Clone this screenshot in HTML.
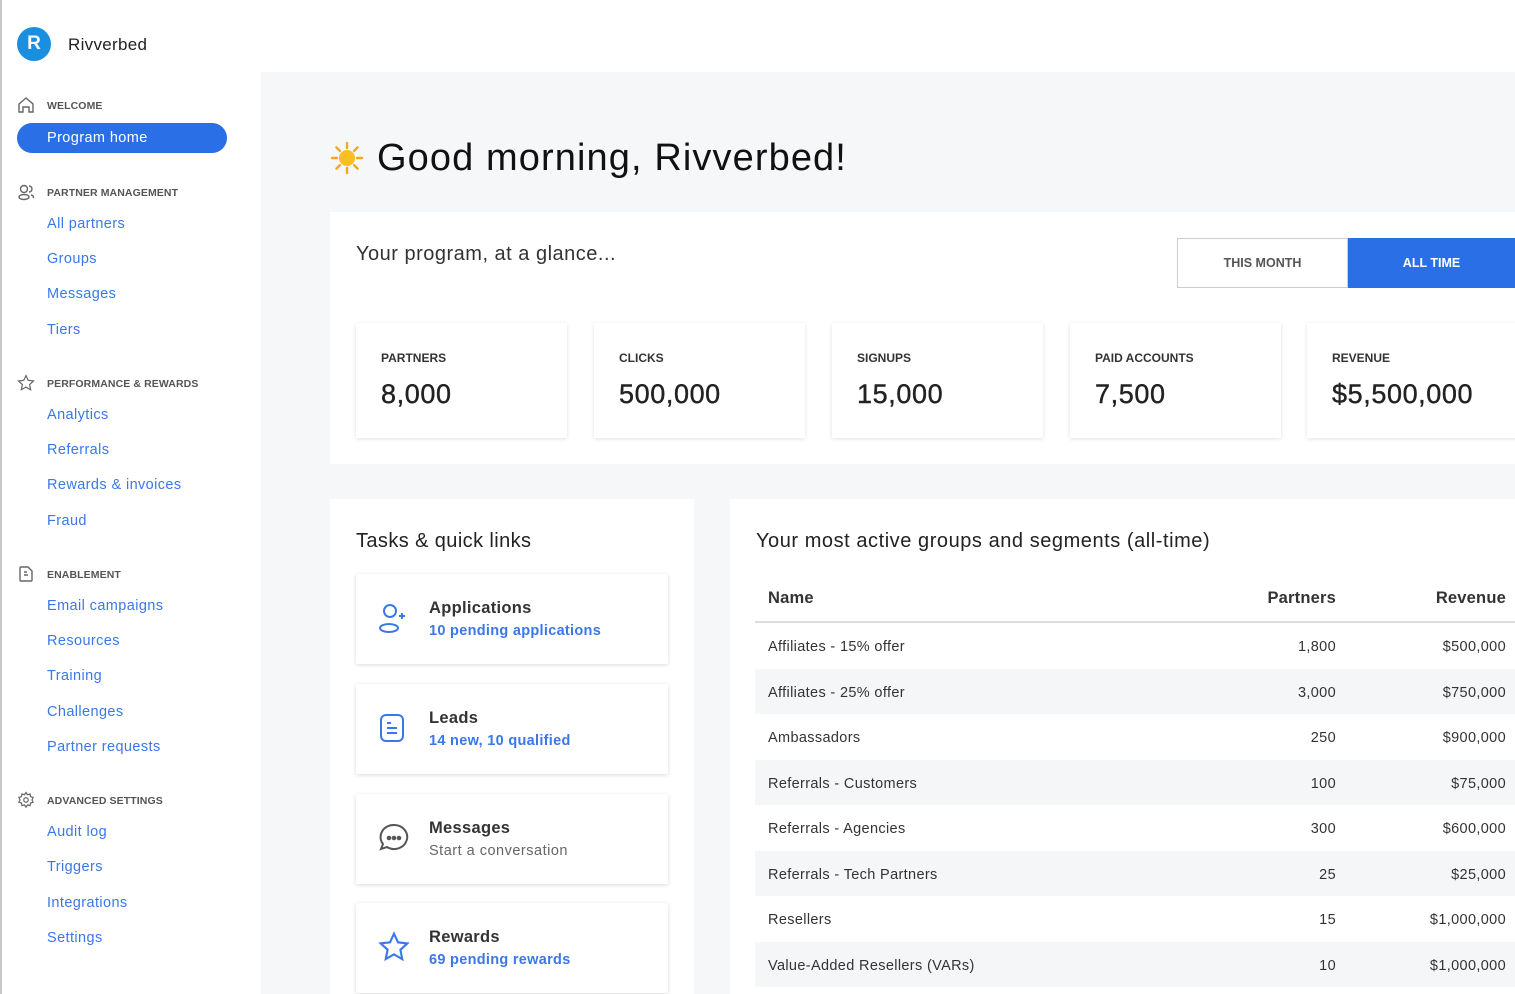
<!DOCTYPE html>
<html><head><meta charset="utf-8"><style>
*{margin:0;padding:0;box-sizing:border-box}
body{width:1515px;height:994px;overflow:hidden;background:#fff;font-family:"Liberation Sans",sans-serif;position:relative;color:#222}
.a{position:absolute}
.side{left:0;top:0;width:261px;height:994px;background:#fff;border-left:2px solid #c8c8c8}
.main{left:261px;top:72px;width:1254px;height:922px;background:#f6f7f9}
.sec{position:absolute;left:47px;font-size:10.5px;font-weight:bold;color:#555;letter-spacing:.1px}
.lnk{position:absolute;left:47px;font-size:14.5px;color:#3b78e7;letter-spacing:.4px}
.ic{position:absolute;left:17px}
.card{position:absolute;background:#fff}
.stat{position:absolute;top:323px;width:211px;height:115px;background:#fff;box-shadow:0 1px 4px rgba(0,0,0,.12)}
.stat .l{position:absolute;left:25px;top:28px;font-size:12px;font-weight:bold;color:#333}
.stat .v{position:absolute;left:25px;top:56px;font-size:27px;color:#222;letter-spacing:.6px;-webkit-text-stroke:.4px #222}
.task{position:absolute;left:356px;width:312px;height:90px;background:#fff;box-shadow:0 1px 4px rgba(0,0,0,.15);border-radius:2px}
.task .t{position:absolute;left:73px;top:25px;font-size:16.5px;font-weight:bold;color:#333;letter-spacing:.3px}
.task .s{position:absolute;left:73px;top:49px;font-size:14.5px;font-weight:bold;color:#3b78e7;letter-spacing:.3px}
.task svg{position:absolute;left:22px;top:28px}
.row{position:absolute;left:755px;width:760px;height:45px;font-size:14.5px;color:#333;letter-spacing:.35px}
.row span{position:absolute;top:16px}
.row .n{left:13px}.row .p{right:179px}.row .r{right:9px}
.sh{background:#f5f6f8}
</style></head><body>
<div class="a side"></div>
<div class="a main"></div>
<div class="a" style="left:17px;top:27px;width:34px;height:34px;border-radius:50%;background:#1a8fe0;color:#fff;font-weight:bold;font-size:19px;text-align:center;line-height:34px">R</div>
<div class="a" style="left:68px;top:35px;font-size:17px;color:#222;letter-spacing:.3px">Rivverbed</div>

<svg class="ic" style="top:96px" width="18" height="18" viewBox="0 0 18 18" fill="none" stroke="#666" stroke-width="1.4"><path d="M2 8L9 2l7 6v8h-4v-5H6v5H2z"/></svg>
<div class="sec" style="top:100px">WELCOME</div>
<div class="a" style="left:17px;top:123px;width:210px;height:30px;border-radius:15px;background:#2a6fe6;color:#fff;font-size:14.5px;padding:7px 0 0 30px;letter-spacing:.4px">Program home</div>

<svg class="ic" style="top:183px" width="18" height="18" viewBox="0 0 18 18" fill="none" stroke="#666" stroke-width="1.4"><circle cx="7" cy="6" r="3.5"/><ellipse cx="7" cy="14" rx="5" ry="2.5"/><path d="M12 3a3 3 0 010 6M14 12a3 2 0 012 3"/></svg>
<div class="sec" style="top:187px">PARTNER MANAGEMENT</div>
<div class="lnk" style="top:216px">All partners</div>
<div class="lnk" style="top:251px">Groups</div>
<div class="lnk" style="top:286px">Messages</div>
<div class="lnk" style="top:322px">Tiers</div>

<svg class="ic" style="top:374px" width="18" height="18" viewBox="0 0 24 24" fill="none" stroke="#666" stroke-width="1.6"><path d="M12 2l3 6.5 7 .8-5.2 4.8 1.4 7L12 17.5 5.8 21l1.4-7L2 9.3l7-.8z"/></svg>
<div class="sec" style="top:378px">PERFORMANCE &amp; REWARDS</div>
<div class="lnk" style="top:407px">Analytics</div>
<div class="lnk" style="top:442px">Referrals</div>
<div class="lnk" style="top:477px">Rewards &amp; invoices</div>
<div class="lnk" style="top:513px">Fraud</div>

<svg class="ic" style="top:565px" width="18" height="18" viewBox="0 0 18 18" fill="none" stroke="#666" stroke-width="1.4"><path d="M4 2h7l4 4v9a1 1 0 01-1 1H4a1 1 0 01-1-1V3a1 1 0 011-1zM7 7h3M7 10h4"/></svg>
<div class="sec" style="top:569px">ENABLEMENT</div>
<div class="lnk" style="top:598px">Email campaigns</div>
<div class="lnk" style="top:633px">Resources</div>
<div class="lnk" style="top:668px">Training</div>
<div class="lnk" style="top:704px">Challenges</div>
<div class="lnk" style="top:739px">Partner requests</div>

<svg class="ic" style="top:791px" width="18" height="18" viewBox="0 0 24 24" fill="none" stroke="#666" stroke-width="1.6"><circle cx="12" cy="12" r="3"/><path d="M12 2l2 3 3.5-1 .5 3.5 3.5 1-1.5 3.5 1.5 3-3.5 1-.5 3.5-3.5-1-2 3-2-3-3.5 1-.5-3.5-3.5-1 1.5-3-1.5-3.5 3.5-1 .5-3.5 3.5 1z"/></svg>
<div class="sec" style="top:795px">ADVANCED SETTINGS</div>
<div class="lnk" style="top:824px">Audit log</div>
<div class="lnk" style="top:859px">Triggers</div>
<div class="lnk" style="top:895px">Integrations</div>
<div class="lnk" style="top:930px">Settings</div>

<svg class="a" style="left:330px;top:141px" width="34" height="34" viewBox="0 0 34 34"><g stroke="#f5a623" stroke-width="2.4" stroke-linecap="round"><path d="M17 2v5M17 27v5M2 17h5M27 17h5M6.4 6.4l3.5 3.5M24.1 24.1l3.5 3.5M6.4 27.6l3.5-3.5M24.1 9.9l3.5-3.5"/></g><circle cx="17" cy="17" r="8" fill="#fbbf24"/></svg>
<div class="a" style="left:377px;top:137px;font-size:38px;color:#111;letter-spacing:1.1px">Good morning, Rivverbed!</div>

<div class="card" style="left:330px;top:212px;width:1185px;height:252px"></div>
<div class="a" style="left:356px;top:243px;font-size:20px;color:#333;letter-spacing:.5px">Your program, at a glance...</div>
<div class="a" style="left:1177px;top:238px;width:171px;height:50px;border:1px solid #ccc;font-size:12.5px;font-weight:bold;color:#555;text-align:center;line-height:48px">THIS MONTH</div>
<div class="a" style="left:1348px;top:238px;width:167px;height:50px;background:#2a6fe6;font-size:12.5px;font-weight:bold;color:#fff;text-align:center;line-height:50px">ALL TIME</div>

<div class="stat" style="left:356px"><div class="l">PARTNERS</div><div class="v">8,000</div></div>
<div class="stat" style="left:594px"><div class="l">CLICKS</div><div class="v">500,000</div></div>
<div class="stat" style="left:832px"><div class="l">SIGNUPS</div><div class="v">15,000</div></div>
<div class="stat" style="left:1070px"><div class="l">PAID ACCOUNTS</div><div class="v">7,500</div></div>
<div class="stat" style="left:1307px;width:220px"><div class="l">REVENUE</div><div class="v">$5,500,000</div></div>

<div class="card" style="left:330px;top:499px;width:364px;height:495px"></div>
<div class="a" style="left:356px;top:530px;font-size:20px;color:#222;letter-spacing:.4px">Tasks &amp; quick links</div>

<div class="task" style="top:574px"><svg width="32" height="34" viewBox="0 0 32 34" fill="none" stroke="#3b78e7" stroke-width="2"><circle cx="12" cy="9" r="6"/><ellipse cx="11" cy="26" rx="9" ry="4"/><path d="M24 11v6M21 14h6"/></svg><div class="t">Applications</div><div class="s">10 pending applications</div></div>
<div class="task" style="top:684px"><svg width="28" height="32" viewBox="0 0 28 32" fill="none" stroke="#3b78e7" stroke-width="2"><rect x="3" y="3" width="22" height="26" rx="5"/><path d="M9 11h4M9 16h10M9 21h10"/></svg><div class="t">Leads</div><div class="s">14 new, 10 qualified</div></div>
<div class="task" style="top:794px"><svg width="32" height="32" viewBox="0 0 32 32" fill="none" stroke="#555" stroke-width="2"><path d="M16 3a13 12 0 11-7 22l-6 2 2-5A13 12 0 0116 3z"/><circle cx="11" cy="16" r="1.3" fill="#555"/><circle cx="16" cy="16" r="1.3" fill="#555"/><circle cx="21" cy="16" r="1.3" fill="#555"/></svg><div class="t">Messages</div><div class="s" style="color:#666;font-weight:normal;letter-spacing:.5px">Start a conversation</div></div>
<div class="task" style="top:903px"><svg width="32" height="32" viewBox="0 0 24 24" fill="none" stroke="#3b78e7" stroke-width="1.6"><path d="M12 2l3 6.5 7 .8-5.2 4.8 1.4 7L12 17.5 5.8 21l1.4-7L2 9.3l7-.8z"/></svg><div class="t">Rewards</div><div class="s">69 pending rewards</div></div>

<div class="card" style="left:730px;top:499px;width:785px;height:495px"></div>
<div class="a" style="left:756px;top:530px;font-size:20px;color:#222;letter-spacing:.55px">Your most active groups and segments (all-time)</div>
<div class="row" style="top:575px;font-weight:bold;font-size:16.5px;border-bottom:2px solid #ddd;height:48px;letter-spacing:.2px"><span class="n" style="top:14px">Name</span><span class="p" style="top:14px">Partners</span><span class="r" style="top:14px">Revenue</span></div>
<div class="row" style="top:623px"><span class="n">Affiliates - 15% offer</span><span class="p">1,800</span><span class="r">$500,000</span></div>
<div class="row sh" style="top:669px"><span class="n">Affiliates - 25% offer</span><span class="p">3,000</span><span class="r">$750,000</span></div>
<div class="row" style="top:714px"><span class="n">Ambassadors</span><span class="p">250</span><span class="r">$900,000</span></div>
<div class="row sh" style="top:760px"><span class="n">Referrals - Customers</span><span class="p">100</span><span class="r">$75,000</span></div>
<div class="row" style="top:805px"><span class="n">Referrals - Agencies</span><span class="p">300</span><span class="r">$600,000</span></div>
<div class="row sh" style="top:851px"><span class="n">Referrals - Tech Partners</span><span class="p">25</span><span class="r">$25,000</span></div>
<div class="row" style="top:896px"><span class="n">Resellers</span><span class="p">15</span><span class="r">$1,000,000</span></div>
<div class="row sh" style="top:942px"><span class="n">Value-Added Resellers (VARs)</span><span class="p">10</span><span class="r">$1,000,000</span></div>
</body></html>
